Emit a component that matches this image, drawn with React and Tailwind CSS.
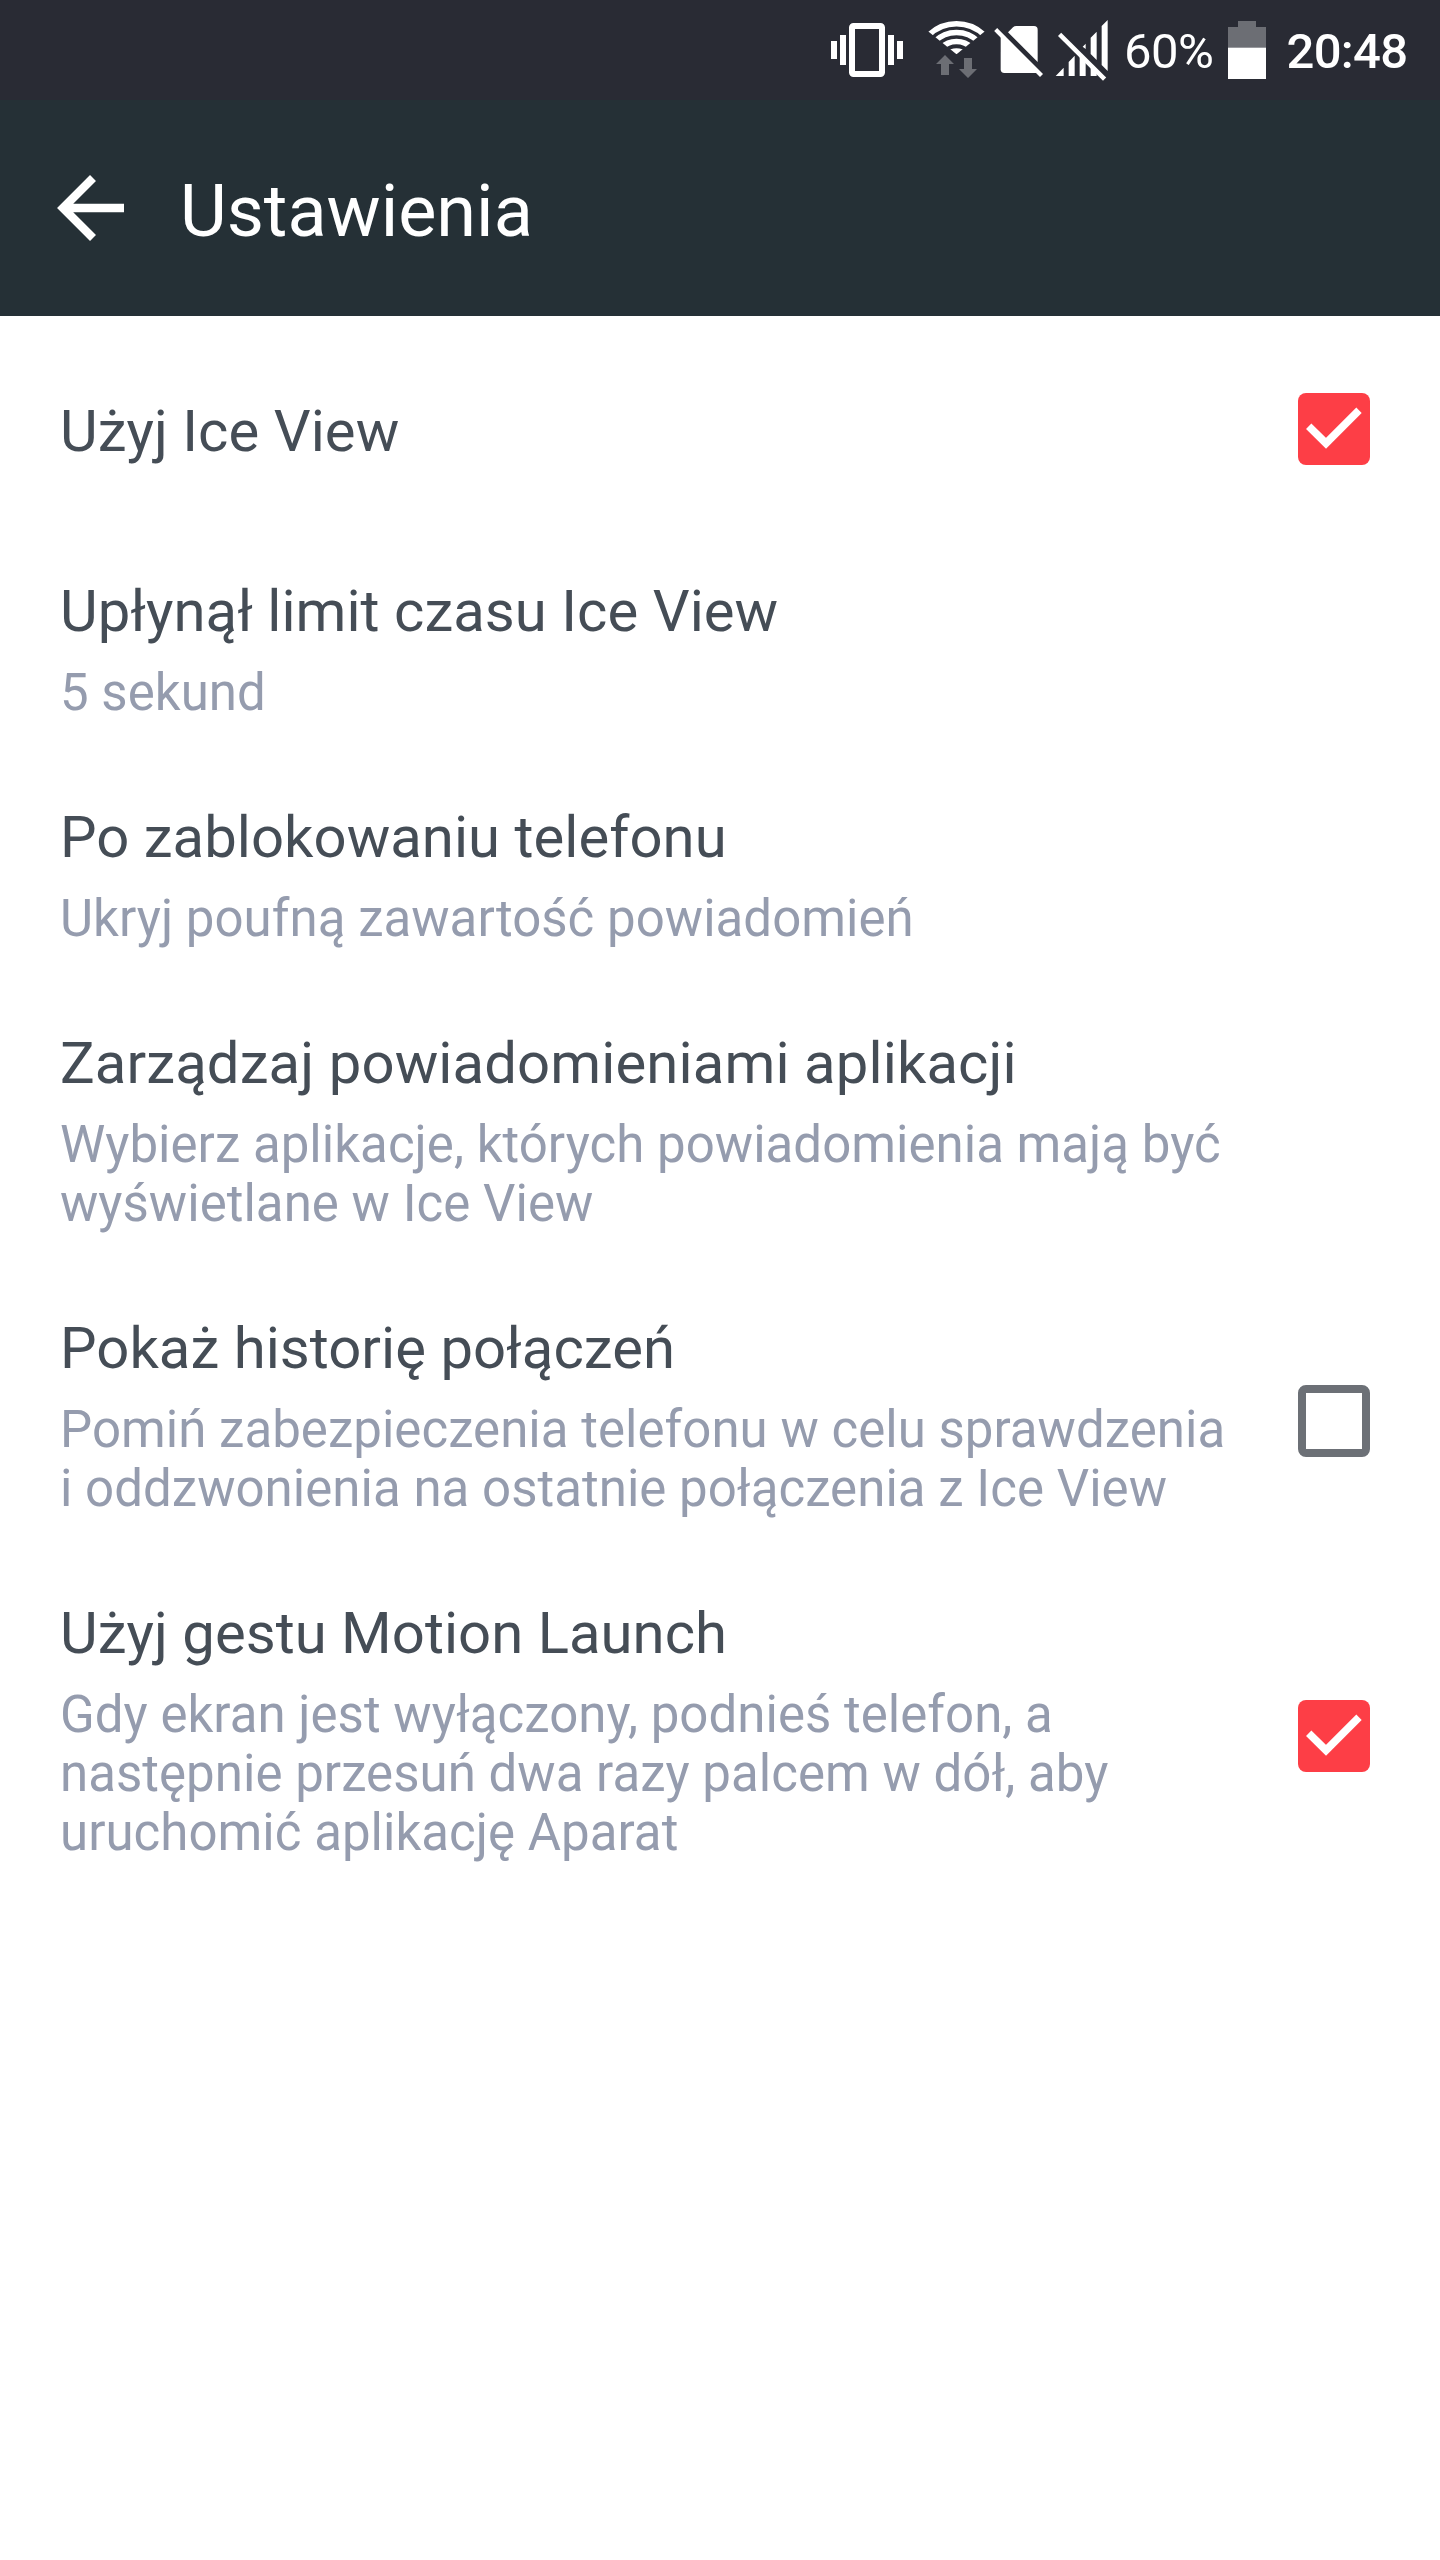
import { useState } from 'react';
import clsx from 'clsx';

const initialSettings = [
  { id: 'ice-view', title: 'Użyj Ice View', checked: true },
  { id: 'timeout', title: 'Upłynął limit czasu Ice View', summary: ['5 sekund'] },
  { id: 'lock', title: 'Po zablokowaniu telefonu', summary: ['Ukryj poufną zawartość powiadomień'] },
  {
    id: 'notifications',
    title: 'Zarządzaj powiadomieniami aplikacji',
    summary: ['Wybierz aplikacje, których powiadomienia mają być', 'wyświetlane w Ice View'],
    wide: true,
  },
  {
    id: 'history',
    title: 'Pokaż historię połączeń',
    summary: ['Pomiń zabezpieczenia telefonu w celu sprawdzenia', 'i oddzwonienia na ostatnie połączenia z Ice View'],
    checked: false,
  },
  {
    id: 'motion',
    title: 'Użyj gestu Motion Launch',
    summary: ['Gdy ekran jest wyłączony, podnieś telefon, a', 'następnie przesuń dwa razy palcem w dół, aby', 'uruchomić aplikację Aparat'],
    checked: true,
  },
];

const VibrateIcon = () => (
  <svg className="h-[100px] w-[72px] shrink-0" viewBox="0 0 72 100" fill="#fff">
    <rect x="21" y="26" width="30" height="48" rx="1.5" fill="none" stroke="#fff" strokeWidth="6" />
    <rect x="0" y="41" width="6" height="18" />
    <rect x="9" y="35" width="6" height="30" />
    <rect x="57" y="35" width="6" height="30" />
    <rect x="66" y="41" width="6" height="18" />
  </svg>
);

const WifiIcon = () => (
  <svg className="ml-[25px] h-[100px] w-[57px] shrink-0" viewBox="324 0 171 300">
    <clipPath id="wifi-wedge">
      <path d="M409.500 163L310 82.500V40H509V82.500Z" />
    </clipPath>
    <g clipPath="url(#wifi-wedge)" fill="none" stroke="#fff">
      <circle cx="409.500" cy="190" r="119" strokeWidth="16.500" />
      <circle cx="409.500" cy="190" r="92.500" strokeWidth="17" />
      <circle cx="409.500" cy="190" r="65.500" strokeWidth="17" />
      <circle cx="409.500" cy="190" r="45" fill="#fff" stroke="none" />
    </g>
    <path d="M375 165L402 192H387V225H363V192H348ZM444 234L417 207H432V174H456V207H471Z" fill="#6c6e74" />
  </svg>
);

const NoSimIcon = () => (
  <svg className="ml-[9px] h-[100px] w-[49px] shrink-0" viewBox="523 0 147 300" fill="#fff">
    <path d="M565 97L580 82Q584 78 590 78H643Q654 78 654 89V186Z" />
    <path d="M543 103V208Q543 219 554 219H654V214Z" />
    <path d="M523.500 93L532.500 84L670 222L661 231Z" />
  </svg>
);

const NoSignalIcon = () => (
  <svg className="ml-[12px] h-[100px] w-[53px] shrink-0" viewBox="706 0 159 300" fill="#fff">
    <path d="M846 78L864 60V213L846 195ZM813 113L831 95V180L813 162ZM789 140L798 131V147Z" />
    <path d="M708 228L732 203V228ZM747 186L765 167V228H747ZM780 160L798 178V228H780ZM813 190L831 208V228H813Z" />
    <path d="M715 108L724.500 98.500L859.500 232.500L850 242Z" />
  </svg>
);

const BatteryIcon = () => (
  <svg className="h-[100px] w-[38px] shrink-0" viewBox="0 0 38 100">
    <path d="M10 21H28V27H38V48H0V27H10Z" fill="#6c6e74" />
    <rect y="47.700" width="38" height="31.300" fill="#fff" />
  </svg>
);

const StatusBar = () => (
  <div className="flex h-[100px] items-center bg-[#292b34] pl-[831px] text-[49px] leading-[58px] text-white">
    <VibrateIcon />
    <WifiIcon />
    <NoSimIcon />
    <NoSignalIcon />
    <span className="ml-[16px] w-[104px] shrink-0 whitespace-nowrap pt-[4px] tracking-[-0.5px]">60%</span>
    <BatteryIcon />
    <span className="ml-[20.500px] whitespace-nowrap pt-[4px] font-medium tracking-[-0.7px]">20:48</span>
  </div>
);

const AppBar = () => (
  <header className="flex h-[216px] items-center bg-[#253036] pl-[56px] text-white">
    <button aria-label="Wstecz" className="shrink-0">
      <svg className="h-[68px] w-[68px]" viewBox="0 0 68 68" fill="none" stroke="#fff" strokeWidth="8.400">
        <path d="M37 4L7 34L37 64M7 34H68" />
      </svg>
    </button>
    <h1 className="ml-[56px] pt-[7px] text-[72px] leading-[84px]">Ustawienia</h1>
  </header>
);

const Checkbox = ({ checked, onChange }) => (
  <button
    role="checkbox"
    aria-checked={checked}
    onClick={onChange}
    className={clsx('h-[72px] w-[72px] shrink-0 rounded-[8px]', checked ? 'bg-[#fd3e46]' : 'border-[8px] border-[#6c7076]')}
  >
    {checked && (
      <svg className="h-[72px] w-[72px]" viewBox="0 0 72 72" fill="none" stroke="#fff" strokeWidth="7.600">
        <path d="M10.700 33.200L28 50.300L61 17.300" />
      </svg>
    )}
  </button>
);

const SettingRow = ({ setting, onToggle }) => (
  <li className={clsx('flex items-center justify-between pl-[60px] pr-[70px]', setting.summary ? 'pb-[46px] pt-[35px]' : 'h-[226px]')}>
    <div className="whitespace-nowrap">
      <h2
        className={clsx(
          'text-[58px] leading-[68px] text-[#454d56]',
          setting.wide ? 'tracking-[0.12px]' : 'tracking-[0.04px]',
          !setting.summary && 'pt-[4px]'
        )}
      >
        {setting.title}
      </h2>
      {setting.summary && (
        <p className="mt-[18px] text-[51px] leading-[59px] tracking-[0.03px] text-[#959cae]">
          {setting.summary.map((line) => (
            <span key={line} className="block">{line}</span>
          ))}
        </p>
      )}
    </div>
    {setting.checked !== undefined && (
      <div className={clsx('flex shrink-0', setting.summary && 'pt-[10.6px]')}>
        <Checkbox checked={setting.checked} onChange={() => onToggle(setting.id)} />
      </div>
    )}
  </li>
);

const App = () => {
  const [settings, setSettings] = useState(initialSettings);

  const handleToggle = (id) => {
    setSettings((prev) => prev.map((s) => (s.id === id ? { ...s, checked: !s.checked } : s)));
  };

  return (
    <div className="h-[2560px] w-[1440px] overflow-hidden bg-white font-['Roboto',sans-serif]">
      <StatusBar />
      <AppBar />
      <ul>
        {settings.map((setting) => (
          <SettingRow key={setting.id} setting={setting} onToggle={handleToggle} />
        ))}
      </ul>
    </div>
  );
};

export default App;
